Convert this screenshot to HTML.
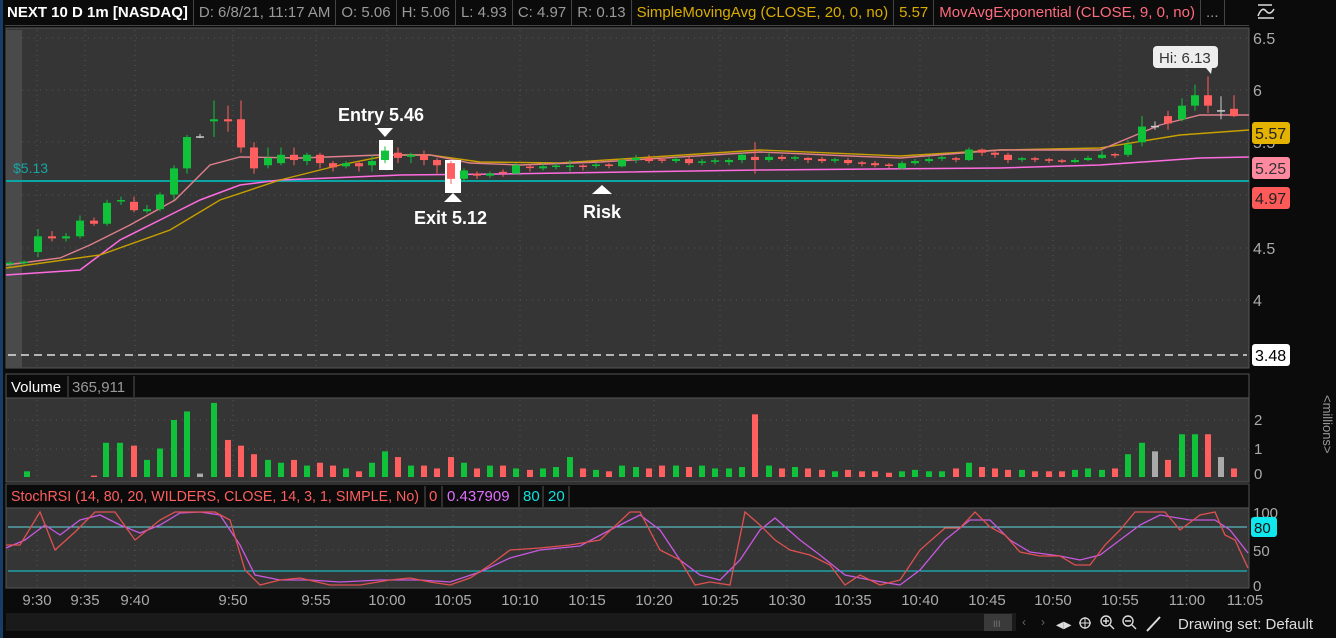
<!DOCTYPE html>
<html><head><meta charset="utf-8">
<style>
*{margin:0;padding:0;box-sizing:border-box}
body{width:1336px;height:638px;background:#0b0b0b;overflow:hidden;font-family:"Liberation Sans",sans-serif;position:relative}
.hdr{position:absolute;top:0;height:26px;display:flex;font-size:15px;line-height:25px}
.hdr div{border-right:1px solid #444;padding:0 5px;color:#9a9a9a;white-space:nowrap}
svg{position:absolute;left:0;top:0}
</style></head><body>
<div class="hdr" style="left:5px;width:1244px;border-bottom:1px solid #444">
<div style="color:#fff;font-weight:bold;padding-left:2px">NEXT 10 D 1m [NASDAQ]</div>
<div>D: 6/8/21, 11:17 AM</div><div>O: 5.06</div><div>H: 5.06</div><div>L: 4.93</div><div>C: 4.97</div><div>R: 0.13</div>
<div style="color:#d9ad00">SimpleMovingAvg (CLOSE, 20, 0, no)</div><div style="color:#d9ad00">5.57</div>
<div style="color:#ff6b7e">MovAvgExponential (CLOSE, 9, 0, no)</div><div>...</div>
</div>
<svg id="s" width="1336" height="638" font-family="Liberation Sans, sans-serif"></svg>
<script>
var S=document.getElementById('s'),h='';
function R(x,y,w,hh,f,ex){h+='<rect x="'+x+'" y="'+y+'" width="'+w+'" height="'+hh+'" fill="'+f+'" '+(ex||'')+'/>';}
function T(x,y,t,f,sz,ex){h+='<text x="'+x+'" y="'+y+'" fill="'+f+'" font-size="'+(sz||15)+'" '+(ex||'')+'>'+t+'</text>';}
function L(x1,y1,x2,y2,c,ex){h+='<line x1="'+x1+'" y1="'+y1+'" x2="'+x2+'" y2="'+y2+'" stroke="'+c+'" '+(ex||'')+'/>';}
function P(pts,c,w){h+='<polyline fill="none" stroke="'+c+'" stroke-width="'+(w||1.3)+'" points="'+pts+'"/>';}
R(0,0,3,638,'#163d63');
R(6,28,1243,340,'#353535','stroke="#555"');
R(6,30,16,338,'#4a4a4a');
R(6,374,1243,24,'#0b0b0b','stroke="#555"');
R(6,398,1243,84,'#353535','stroke="#555"');
R(6,484,1243,24,'#0b0b0b','stroke="#555"');
R(6,508,1243,80,'#353535','stroke="#555"');
var gx=[37,85,135,233,316,387,453,520,587,654,720,787,853,920,987,1053,1120,1187];
gx.forEach(function(x){L(x,30,x,366,'#555','stroke-dasharray="1,4"');L(x,400,x,480,'#555','stroke-dasharray="1,4"');L(x,510,x,586,'#555','stroke-dasharray="1,4"');});
[38,90,142,195,248,300].forEach(function(y){L(22,y,1247,y,'#555','stroke-dasharray="1,5"');});
[420,449].forEach(function(y){L(8,y,1247,y,'#555','stroke-dasharray="1,5"');});
L(8,550,1247,550,'#555','stroke-dasharray="1,5"');
function Y(p){return 90+(6-p)*104.5;}
L(6,181,1249,181,'#0aa5a5','stroke-width="2"');
T(13,173,'$5.13','#16a6a6',14);
L(8,355,1247,355,'#fff','stroke-dasharray="8,5" stroke-width="1.3"');
P('6,275 80,270 120,240 170,215 200,200 240,185 280,180 330,178 400,175 500,174 760,170 1000,168 1100,165 1200,158 1249,157','#ff6be0',1.5);
P('6,268 100,255 170,230 220,200 280,180 340,165 390,155 430,155 480,162 560,163 760,150 900,156 1000,150 1100,148 1180,135 1249,130','#c8a000',1.4);
P('6,265 60,258 90,245 130,225 175,200 210,165 240,157 300,158 380,155 430,155 470,163 520,165 600,162 760,152 850,156 900,158 1000,150 1100,150 1160,125 1200,115 1249,115','#e0808c',1.4);
var d="10,4.33,4.34,4.36,4.31;24,4.34,4.35,4.37,4.32;38,4.45,4.6,4.67,4.4;52,4.6,4.58,4.65,4.55;66,4.58,4.6,4.63,4.55;80,4.6,4.75,4.8,4.58;94,4.75,4.72,4.78,4.7;107,4.72,4.92,4.95,4.7;121,4.93,4.94,4.98,4.9;134,4.93,4.85,4.98,4.83;147,4.84,4.86,4.9,4.82;160,4.86,5.0,5.02,4.84;174,5.0,5.25,5.28,4.95;187,5.25,5.55,5.57,5.2;200,5.55,5.55,5.58,5.54;214,5.7,5.72,5.9,5.55;228,5.72,5.7,5.85,5.6;241,5.72,5.45,5.9,5.4;254,5.45,5.25,5.5,5.2;268,5.28,5.35,5.45,5.25;281,5.3,5.38,5.45,5.28;294,5.38,5.33,5.45,5.28;307,5.32,5.38,5.4,5.28;320,5.38,5.3,5.4,5.25;333,5.3,5.26,5.32,5.22;346,5.27,5.3,5.32,5.25;359,5.3,5.27,5.32,5.22;372,5.28,5.32,5.38,5.22;385,5.33,5.42,5.46,5.3;398,5.4,5.35,5.45,5.3;411,5.36,5.38,5.4,5.3;424,5.38,5.33,5.42,5.28;437,5.33,5.28,5.35,5.2;451,5.3,5.15,5.32,5.1;464,5.15,5.23,5.25,5.12;477,5.2,5.18,5.22,5.15;490,5.18,5.2,5.22,5.16;503,5.21,5.2,5.24,5.17;516,5.2,5.28,5.3,5.2;530,5.26,5.25,5.28,5.22;543,5.25,5.27,5.3,5.23;556,5.26,5.27,5.3,5.24;570,5.26,5.27,5.33,5.22;583,5.27,5.26,5.29,5.23;596,5.27,5.28,5.3,5.25;609,5.28,5.27,5.3,5.25;622,5.27,5.33,5.35,5.26;636,5.33,5.35,5.38,5.3;649,5.35,5.32,5.38,5.3;662,5.33,5.32,5.35,5.3;676,5.32,5.34,5.36,5.3;689,5.34,5.3,5.36,5.28;702,5.3,5.31,5.34,5.28;715,5.31,5.32,5.35,5.29;729,5.31,5.33,5.35,5.28;742,5.33,5.38,5.4,5.3;755,5.36,5.33,5.5,5.2;769,5.33,5.36,5.4,5.31;782,5.36,5.34,5.38,5.32;795,5.34,5.35,5.37,5.32;808,5.35,5.33,5.36,5.3;822,5.34,5.32,5.36,5.3;835,5.32,5.33,5.35,5.3;848,5.33,5.3,5.35,5.28;862,5.3,5.29,5.32,5.27;875,5.3,5.28,5.32,5.26;889,5.28,5.27,5.3,5.25;902,5.25,5.3,5.32,5.24;915,5.3,5.32,5.34,5.28;929,5.32,5.34,5.36,5.3;942,5.34,5.35,5.37,5.32;956,5.34,5.33,5.36,5.31;969,5.33,5.43,5.45,5.32;982,5.43,5.4,5.44,5.37;995,5.4,5.38,5.42,5.35;1008,5.38,5.33,5.4,5.3;1022,5.33,5.34,5.36,5.31;1035,5.34,5.33,5.36,5.31;1049,5.33,5.32,5.35,5.3;1062,5.32,5.31,5.34,5.3;1075,5.31,5.33,5.35,5.3;1088,5.33,5.35,5.37,5.32;1102,5.35,5.38,5.42,5.34;1115,5.38,5.37,5.4,5.35;1128,5.38,5.48,5.52,5.36;1142,5.5,5.65,5.75,5.46;1155,5.65,5.65,5.7,5.62;1168,5.75,5.68,5.8,5.62;1182,5.72,5.85,5.92,5.7;1195,5.85,5.95,6.05,5.8;1208,5.95,5.85,6.13,5.78;1221,5.8,5.8,5.94,5.72;1234,5.82,5.75,5.95,5.74";
R(379,140,14,30,'#fff');R(445,160,16,33,'#fff');
d.split(';').forEach(function(r){var a=r.split(',').map(Number),x=a[0],o=a[1],c=a[2],hi=a[3],lo=a[4];
var col=c>o?'#10c23a':(c<o?'#ff5f5f':'#ccc');
L(x,Y(hi),x,Y(lo),col,'stroke-width="1"');
var t=Math.min(Y(o),Y(c)),b=Math.max(Y(o),Y(c));if(b-t<1.5){L(x-4,t,x+4,t,col,'stroke-width="1.5"');}else R(x-4,t,8,b-t,col);});
T(338,121,'Entry 5.46','#fff',18,'font-weight="bold"');
h+='<polygon points="377,128 393,128 385,137" fill="#fff"/>';
h+='<polygon points="444,202 462,202 453,193" fill="#fff"/>';
T(414,224,'Exit 5.12','#fff',18,'font-weight="bold"');
h+='<polygon points="592,194 612,194 602,185" fill="#fff"/>';
T(583,218,'Risk','#fff',18,'font-weight="bold"');
R(1153,46,65,22,'#eee','rx="4"');h+='<polygon points="1206,68 1212,68 1211,74" fill="#eee"/>';
T(1159,63,'Hi: 6.13','#333',15);
[[38,'6.5'],[90,'6'],[142,'5.5'],[248,'4.5'],[300,'4']].forEach(function(v){T(1253,v[0]+6,v[1],'#aaa',16);});
function B(y,t,bg,fg){R(1252,y-11,38,22,bg,'rx="3"');T(1255,y+6,t,fg,16);}
B(133,'5.57','#e3b300','#222');B(168,'5.25','#ff8aa0','#333');B(198,'4.97','#ff5a5a','#222');B(355,'3.48','#fff','#000');
h+='<path d="M1258 5 L1272 5 M1258 16 Q1262 6 1266 11 T1274 9 M1258 18 L1274 18" stroke="#ddd" fill="none" stroke-width="1.5"/>';
T(11,392,'Volume','#fff',15);L(68,376,68,397,'#555');T(72,392,'365,911','#999',15);L(134,376,134,397,'#555');
var v={27:.2,94:.05,106:1.2,120:1.2,134:1.1,147:.6,160:1,174:2,187:2.3,200:.12,214:2.6,228:1.3,241:1.1,254:.8,268:.6,281:.5,294:.6,307:.4,320:.5,333:.4,346:.3,359:.2,372:.5,385:.9,398:.7,411:.4,424:.4,437:.3,451:.7,464:.5,477:.3,490:.4,503:.4,516:.3,530:.25,543:.3,556:.35,570:.7,583:.3,596:.25,609:.2,622:.4,636:.35,649:.3,662:.4,676:.4,689:.35,702:.4,715:.3,729:.3,742:.35,755:2.2,769:.4,782:.3,795:.35,808:.3,822:.25,835:.2,848:.25,862:.2,875:.2,889:.15,902:.2,915:.25,929:.2,942:.2,956:.3,969:.5,982:.35,995:.3,1008:.25,1022:.25,1035:.2,1049:.2,1062:.2,1075:.25,1088:.3,1102:.25,1115:.3,1128:.8,1142:1.2,1155:.9,1168:.6,1182:1.5,1195:1.5,1208:1.5,1221:.7,1234:.3};
var cl={};d.split(';').forEach(function(r){var a=r.split(',').map(Number);cl[a[0]]=a[2]>a[1]?'#10c23a':(a[2]<a[1]?'#ff5f5f':'#aaa');});
for(var k in v){var hh=v[k]*28.5;R(+k-3,477-hh,6,hh,cl[k]||'#10c23a');}
[[420,'2'],[449,'1'],[474,'0']].forEach(function(a){T(1254,a[0]+5,a[1],'#aaa',15);});
T(1323,395,'&lt;millions&gt;','#999',13,'transform="rotate(90 1323 395)" text-anchor="start"');
T(11,501,'StochRSI (14, 80, 20, WILDERS, CLOSE, 14, 3, 1, SIMPLE, No)','#ff5f5f',15,'textLength="408" lengthAdjust="spacingAndGlyphs"');
L(425,486,425,507,'#555');T(429,501,'0','#ff5f5f',15);L(442,486,442,507,'#555');T(447,501,'0.437909','#e070ff',15);L(519,486,519,507,'#555');T(523,501,'80','#0ee0e0',15);L(543,486,543,507,'#555');T(548,501,'20','#0ee0e0',15);L(569,486,569,507,'#555');
L(8,527,1247,527,'#5fd8e0');L(8,571,1247,571,'#0ed6e0');
P('6,548 25,540 45,525 60,535 80,520 100,515 120,525 140,533 160,525 180,513 200,512 220,515 240,545 255,575 280,580 310,580 340,582 380,580 420,580 450,582 480,572 510,558 540,550 580,546 610,530 640,515 660,530 680,560 700,575 720,580 740,560 760,530 775,518 800,540 820,555 845,575 870,580 900,585 920,570 945,540 970,520 990,520 1010,540 1030,552 1060,556 1080,560 1100,555 1120,540 1140,525 1160,515 1190,520 1215,520 1230,530 1248,553','#c858e0',1.3);
P('6,545 20,545 40,512 55,550 75,532 95,512 115,512 135,540 160,520 175,512 195,512 215,512 230,520 245,570 260,585 280,580 300,578 330,585 360,585 390,580 410,578 430,582 450,585 470,578 490,565 510,550 540,548 570,545 600,540 630,512 640,512 660,550 680,560 695,585 710,582 730,585 745,512 760,525 775,540 790,550 810,555 830,565 845,585 860,575 880,585 900,580 920,550 945,528 960,528 975,512 990,527 1005,535 1020,552 1040,556 1060,556 1075,565 1090,565 1105,545 1120,530 1135,512 1165,512 1180,530 1200,515 1215,512 1225,535 1235,540 1248,568','#e05050',1.3);
T(1253,518,'100','#aaa',15);T(1253,556,'50','#aaa',15);T(1253,591,'0','#aaa',15);
R(1251,517,26,20,'#10e6ee','rx="3"');T(1254,533,'80','#111',15);
var tl=[[37,'9:30'],[85,'9:35'],[135,'9:40'],[233,'9:50'],[316,'9:55'],[387,'10:00'],[453,'10:05'],[520,'10:10'],[587,'10:15'],[654,'10:20'],[720,'10:25'],[787,'10:30'],[853,'10:35'],[920,'10:40'],[987,'10:45'],[1053,'10:50'],[1120,'10:55'],[1187,'11:00'],[1245,'11:05']];
tl.forEach(function(a){T(a[0],605,a[1],'#aaa',15,'text-anchor="middle"');});
R(6,613,1010,18,'#1a1a1a');R(984,614,28,17,'#3a3a3a');T(993,627,'III','#777',9);
T(1022,626,'‹','#666',12);T(1041,626,'›','#666',12);
T(1056,628,'◀▶','#ddd',10);
h+='<circle cx="1085" cy="623" r="5" stroke="#ddd" fill="none" stroke-width="1.3"/><path d="M1079 623h12M1085 617v12" stroke="#ddd"/>';
h+='<circle cx="1106" cy="621" r="5" stroke="#ddd" fill="none" stroke-width="1.4"/><path d="M1110 625l4 4M1103 621h6M1106 618v6" stroke="#ddd" stroke-width="1.4"/>';
h+='<circle cx="1128" cy="621" r="5" stroke="#ddd" fill="none" stroke-width="1.4"/><path d="M1132 625l4 4M1125 621h6" stroke="#ddd" stroke-width="1.4"/>';
L(1147,631,1160,617,'#ddd','stroke-width="2"');
T(1178,629,'Drawing set: Default','#ddd',15);
S.innerHTML=h;
</script>
</body></html>
